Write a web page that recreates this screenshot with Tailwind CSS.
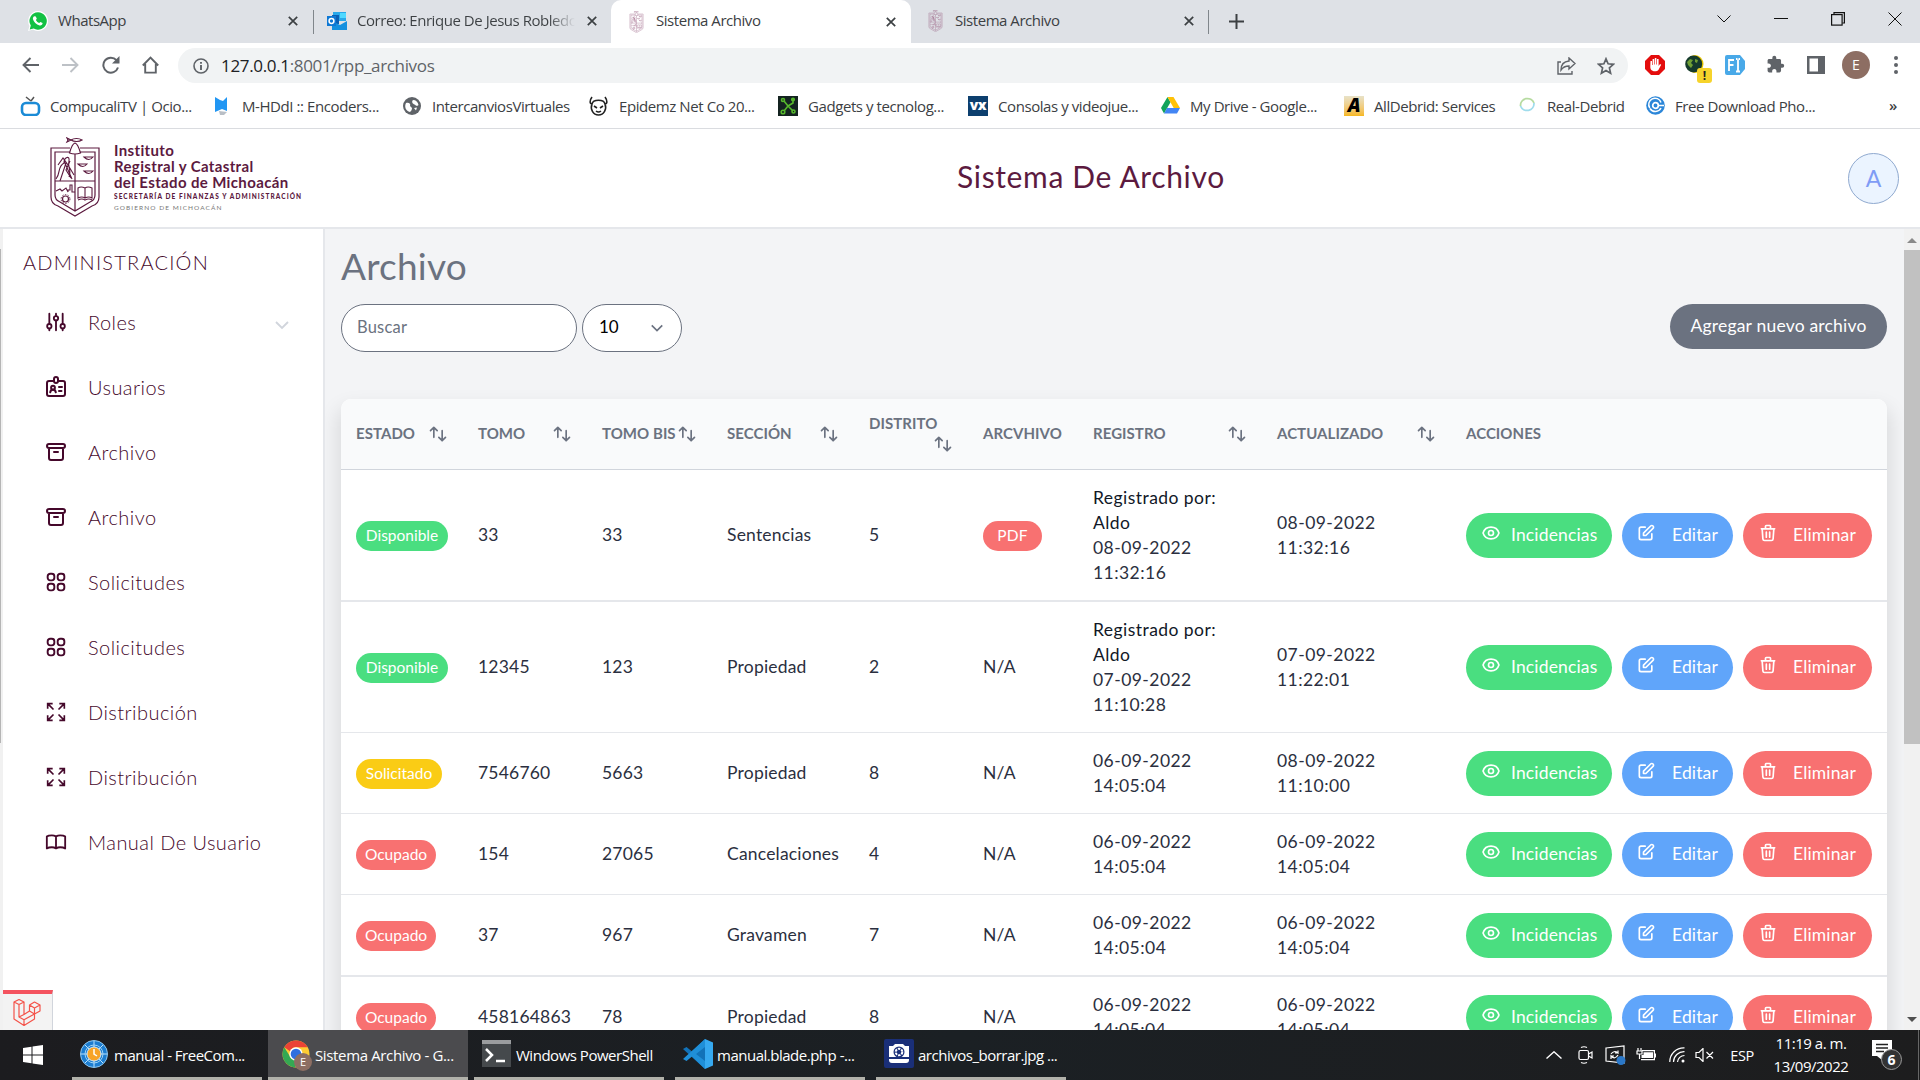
<!DOCTYPE html>
<html lang="es">
<head>
<meta charset="utf-8">
<title>Sistema Archivo</title>
<script src="https://cdn.jsdelivr.net/npm/@tailwindcss/browser@4"></script>
</head>
<body class="w-[1920px] h-[1080px] overflow-hidden flex flex-col bg-white font-['Lato',sans-serif]">

<svg class="hidden">
  <symbol id="sort" viewBox="0 0 24 24" fill="none" stroke="currentColor" stroke-width="2" stroke-linecap="round" stroke-linejoin="round"><path d="M7 16V4m0 0L3 8m4-4l4 4m6 0v12m0 0l4-4m-4 4l-4-4"/></symbol>
  <symbol id="eye" viewBox="0 0 24 24" fill="none" stroke="currentColor" stroke-width="2" stroke-linecap="round" stroke-linejoin="round"><path d="M15 12a3 3 0 11-6 0 3 3 0 016 0z"/><path d="M2.458 12C3.732 7.943 7.523 5 12 5c4.478 0 8.268 2.943 9.542 7-1.274 4.057-5.064 7-9.542 7-4.477 0-8.268-2.943-9.542-7z"/></symbol>
  <symbol id="edit" viewBox="0 0 24 24" fill="none" stroke="currentColor" stroke-width="2" stroke-linecap="round" stroke-linejoin="round"><path d="M11 5H6a2 2 0 00-2 2v11a2 2 0 002 2h11a2 2 0 002-2v-5m-1.414-9.414a2 2 0 112.828 2.828L11.828 15H9v-2.828l8.586-8.586z"/></symbol>
  <symbol id="trash" viewBox="0 0 24 24" fill="none" stroke="currentColor" stroke-width="2" stroke-linecap="round" stroke-linejoin="round"><path d="M19 7l-.867 12.142A2 2 0 0116.138 21H7.862a2 2 0 01-1.995-1.858L5 7m5 4v6m4-6v6m1-10V4a1 1 0 00-1-1h-4a1 1 0 00-1 1v3M4 7h16"/></symbol>
  <symbol id="chev" viewBox="0 0 24 24" fill="none" stroke="currentColor" stroke-width="2.8"><path d="M3 7.5l9 9 9-9"/></symbol>
  <symbol id="roles" viewBox="0 0 24 24" fill="none" stroke="currentColor" stroke-width="2.2" stroke-linecap="round"><path d="M4 2v12M4 20v2M12 2v2M12 10v12M20 2v12M20 20v2"/><circle cx="4" cy="17" r="2.6"/><circle cx="12" cy="7.5" r="2.6"/><circle cx="20" cy="17" r="2.6"/></symbol>
  <symbol id="users" viewBox="0 0 24 24" fill="none" stroke="currentColor" stroke-width="2" stroke-linecap="round" stroke-linejoin="round"><path d="M10 6H5a2 2 0 00-2 2v11a2 2 0 002 2h14a2 2 0 002-2V8a2 2 0 00-2-2h-5"/><path d="M10 6V4a2 2 0 014 0v2a2 2 0 01-4 0"/><circle cx="9" cy="12.7" r="1.9"/><path d="M6.2 17.3c.4-3.4 5.2-3.4 5.600 0M15 12h3M15 16h2.500"/></symbol>
  <symbol id="archive" viewBox="0 0 24 24" fill="none" stroke="currentColor" stroke-width="2" stroke-linecap="round" stroke-linejoin="round"><path d="M5 8h14M5 8a2 2 0 110-4h14a2 2 0 110 4M5 8v10a2 2 0 002 2h10a2 2 0 002-2V8m-9 4h4"/></symbol>
  <symbol id="grid4" viewBox="0 0 24 24" fill="none" stroke="currentColor" stroke-width="2.3"><rect x="2" y="2" width="8" height="8" rx="3"/><rect x="14" y="2" width="8" height="8" rx="3"/><rect x="2" y="14" width="8" height="8" rx="3"/><rect x="14" y="14" width="8" height="8" rx="3"/></symbol>
  <symbol id="expand" viewBox="0 0 24 24" fill="none" stroke="currentColor" stroke-width="2"><path d="M2 8V2h6M2 2l7 7M16 2h6v6M22 2l-7 7M2 16v6h6M2 22l7-7M22 16v6h-6M22 22l-7-7"/></symbol>
  <symbol id="book" viewBox="0 0 24 24" fill="none" stroke="currentColor" stroke-width="2" stroke-linecap="round" stroke-linejoin="round"><path d="M12 6v13M12 6C10.800 5.200 9.200 4.700 7.500 4.700S3.200 5 2 6v13c1.200-.8 3.800-1.300 5.500-1.300S10.800 18.200 12 19c1.200-.8 2.800-1.300 4.500-1.300s4.300.5 5.500 1.300V6c-1.200-1-3.800-1.300-5.500-1.300S13.200 5.200 12 6"/></symbol>
  <symbol id="shield" viewBox="0 0 50 80" fill="none" stroke="currentColor">
    <path stroke-width="1.200" d="M17 1l4 2c3-2 8-2 11 0-3 2-8 2-11 0l-4 2 1-2zM25 6c-3 1-4 5-5.500 10q5.500 2 11 0C29 11 28 7 25 6zM20 11H1v49q0 7 7 9l17 10 17-10q7-2 7-9V11H30M20 15H5v43q0 5 5 7l15 9 15-9q5-2 5-7V15H30M25 17v57M5 44h40"/>
    <path stroke-width="1.100" d="M6 42c5-6 1-12 8-16 0-6 6-8 5-2-2 5 3 10 0 16M8 28l5-7 5 7 6 10M10 44l6-18M14 24l8 18M20 24l-4 9 5 8M34 20h9q-4 5-9 0zM28 27h9q-4 5-9 0zM34 34h9q-4 5-9 0zM6 54l4-2 2 2 4-3 2 4v-2h2V48h2v7h3M28 51v10q4-2 7 0 4-2 7 0V51q-4-2-7 0-4-2-7 0zM35 51v10M28 63q4-2 7 0 4-2 7 0"/>
    <circle cx="15.500" cy="62" r="3" stroke-width="1.200"/><circle cx="15.500" cy="62" r="4.400" stroke-dasharray="1.400 1.400"/>
  </symbol>
  <symbol id="x" viewBox="0 0 10 10" stroke="currentColor" stroke-width="1.700"><path d="M.8.8l8.400 8.400M9.200.8L.8 9.200"/></symbol>
</svg>

<!-- Tab strip -->
<div class="h-[43px] shrink-0 bg-[#dee1e6] flex text-[15px] tracking-[-0.460px] text-[#3c4043] font-['Open_Sans',sans-serif]">
  <div class="w-[313px] h-[42px] flex items-center pl-[28px] pr-[15px]">
    <svg class="w-5 h-5 mr-[10px]" viewBox="0 0 20 20"><path fill="#fff" d="M10 0a10 10 0 11-5 18.600L0 20l1.500-5A10 10 0 0110 0z"/><path fill="#12c143" d="M10 1.300a8.700 8.700 0 11-4.300 16.200l-4 1.100 1.100-4A8.700 8.700 0 0110 1.300z"/><path fill="#fff" d="M6.500 5.300l1.300.2 1 2.200-.9 1.400c.8 1.600 1.900 2.400 3.300 3l1.200-1.200 2.200 1.100c.1 2-1.600 2.700-3 2.400-3.400-.8-6-3.400-6.700-6.300-.2-1.200.6-2.600 1.600-2.800z"/></svg>
    <span class="flex-1 -mt-[2px]">WhatsApp</span><svg class="w-[10px] h-[10px]"><use href="#x"/></svg>
  </div>
  <div class="w-px h-6 mt-[10px] bg-[#80868b]"></div>
  <div class="w-[297px] h-[42px] flex items-center pl-[13px] pr-[13px] rounded-br-[10px]">
    <svg class="w-5 h-[18px] mr-[10px]" viewBox="0 0 20 18"><path fill="#28a8ea" d="M6 0h13v9H6z"/><path fill="#0a5fb4" d="M5 3h7v9H5z"/><path fill="#50d9ff" d="M13 1h6v5h-6z"/><path fill="#1490df" d="M5 9l8 4 7-4v9H5z"/><path fill="#0f78d4" d="M0 4h9v10H0z"/><circle cx="4.500" cy="9" r="2.400" fill="none" stroke="#fff" stroke-width="1.500"/></svg>
    <span class="w-[218px] -mt-[2px] overflow-hidden whitespace-nowrap bg-linear-to-r from-[#3c4043] from-88% to-transparent bg-clip-text text-transparent mr-[12px]">Correo: Enrique De Jesus Robledo</span><svg class="w-[10px] h-[10px] shrink-0"><use href="#x"/></svg>
  </div>
  <div class="w-[300px] h-[43px] bg-white rounded-t-[10px] flex items-center pl-[18px] pr-[15px]">
    <svg class="w-[15px] h-[22px] mr-[12px] text-[#94557a]"><use href="#shield"/></svg>
    <span class="flex-1 -mt-[2px]">Sistema Archivo</span><svg class="w-[10px] h-[10px]"><use href="#x"/></svg>
  </div>
  <div class="w-[297px] h-[42px] flex items-center pl-[17px] pr-[14px]">
    <svg class="w-[15px] h-[22px] mr-[12px] text-[#94557a]"><use href="#shield"/></svg>
    <span class="flex-1 -mt-[2px]">Sistema Archivo</span><svg class="w-[10px] h-[10px]"><use href="#x"/></svg>
  </div>
  <div class="w-px h-6 mt-[10px] bg-[#80868b]"></div>
  <svg class="w-[15px] h-[15px] mt-[14px] ml-[20px]" viewBox="0 0 15 15" stroke="#3c4043" stroke-width="2"><path d="M7.500 0v15M0 7.500h15"/></svg>
  <div class="ml-auto flex pt-[12px] pr-[18px] gap-[43px] text-[#111]">
    <svg class="w-[14px] h-[14px]" viewBox="0 0 14 14" fill="none" stroke="currentColor"><path d="M.5 3.500L7 10l6.500-6.500"/></svg>
    <svg class="w-[14px] h-[14px]" viewBox="0 0 14 14" stroke="currentColor"><path d="M0 6.500h14"/></svg>
    <svg class="w-[14px] h-[14px]" viewBox="0 0 14 14" fill="none" stroke="currentColor" stroke-width="1.200"><rect x=".6" y="2.600" width="10.500" height="10.500"/><path d="M3 2.500V.6h10.400V11h-2"/></svg>
    <svg class="w-[14px] h-[14px]" viewBox="0 0 14 14" stroke="currentColor"><path d="M.5.5l13 13M13.500.5l-13 13"/></svg>
  </div>
</div>

<!-- Toolbar -->
<div class="h-[43px] shrink-0 flex items-center pl-[22px] text-[#5f6368] pr-[18px] font-['Open_Sans',sans-serif]">
  <svg class="w-[17px] h-4" viewBox="0 0 17 16" fill="none" stroke="currentColor" stroke-width="1.900"><path d="M17 8H1.500M8.500 1l-7 7 7 7"/></svg>
  <svg class="w-[17px] h-4 ml-[23px] text-[#bdc1c6]" viewBox="0 0 17 16" fill="none" stroke="currentColor" stroke-width="1.900"><path d="M0 8h15.500M8.500 1l7 7-7 7"/></svg>
  <svg class="w-[18px] h-[18px] ml-[23px]" viewBox="0 0 18 18" fill="none" stroke="currentColor" stroke-width="2"><path d="M16 11.500A7.500 7.500 0 1114.500 4.200L16.500 6.500"/><path fill="currentColor" stroke="none" d="M17.500 0v7.500H10z"/></svg>
  <svg class="w-[17px] h-[18px] ml-[22px]" viewBox="0 0 17 18" fill="none" stroke="currentColor" stroke-width="1.900"><path d="M.8 9.500L8.500 1.600l7.700 7.900M3.200 8v8.600h10.600V8"/></svg>
  <div class="ml-[19px] h-[35px] mt-[2px] w-[1450px] rounded-full bg-[#f1f3f4] flex items-center pl-[15px] pr-[13px]">
    <svg class="w-4 h-4" viewBox="0 0 16 16" fill="none" stroke="currentColor" stroke-width="1.600"><circle cx="8" cy="8" r="7"/><path stroke-width="1.900" d="M8 7v5M8 4v1.700"/></svg>
    <span class="ml-[12px] text-[17px] tracking-[-0.340px] flex-1"><span class="text-[#202124]">127.0.0.1</span>:8001/rpp_archivos</span>
    <svg class="w-[19px] h-[18px]" viewBox="0 0 19 18" fill="none" stroke="currentColor" stroke-width="1.400"><path d="M4 5H1v12h14v-3M12 1l6 5.500-6 5.500V9c-4 0-6 1-8 4 0-5 3-8.500 8-9z"/></svg>
    <svg class="w-[18px] h-[18px] ml-[21px]" viewBox="0 0 18 18" fill="none" stroke="currentColor" stroke-width="1.700"><path d="M9 1.800l2.100 5 5.400.5-4.100 3.600 1.200 5.300L9 13.400l-4.600 2.800 1.200-5.300L1.500 7.300l5.400-.5z"/></svg>
  </div>
  <svg class="w-5 h-5 ml-[17px]" viewBox="0 0 20 20"><path fill="#e40d0d" d="M6 0h8l6 6v8l-6 6H6l-6-6V6z"/><path fill="#fff" d="M5.500 6h1.500v4h.6V4h1.600v5.500h.6V3h1.600v6.500h.6V4h1.600v7l1.400-2 1.200.8-2.800 5.200c-1 1.500-6 2-7.500-.5-1-1.500-.4-5-.4-8.500z"/></svg>
  <div class="relative ml-[20px] w-[20px] h-5">
    <svg class="w-5 h-5" viewBox="0 0 20 20"><ellipse cx="10" cy="9" rx="8.500" ry="9" fill="#e8c500"/><circle cx="8.700" cy="9" r="8.500" fill="#153a2c"/><path fill="#6f9f35" d="M2 7l3-3 3 1-2 3 2 2-2 3-3-3zM10 4l3 1-1 3-2-1z"/></svg>
    <div class="absolute left-[12px] top-[13px] w-[15px] h-[15px] rounded-[3px] bg-[#f6d32b] text-[#222] text-[12px] leading-[15px] font-bold text-center">!</div>
  </div>
  <svg class="w-[20px] h-5 ml-[20px]" viewBox="0 0 20 20"><path fill="#49a9e8" d="M2 0h13l5 6v8l-5 6H2q-2 0-2-2V2q0-2 2-2z"/><path fill="none" stroke="#fff" stroke-width="1.800" d="M4 16V5h5M4 10h4.500M13 4.500v12M11 4h1.500M13.500 4H15M11 16.500h4"/></svg>
  <svg class="w-[19px] h-[19px] ml-[21px]" viewBox="0 0 24 24" fill="currentColor"><path d="M20.500 11H19V7c0-1.100-.9-2-2-2h-4V3.500a2.500 2.500 0 00-5 0V5H4c-1.100 0-2 .9-2 2v3.800h1.500c1.500 0 2.700 1.200 2.700 2.700S5 16.200 3.500 16.200H2V20c0 1.100.9 2 2 2h3.800v-1.500c0-1.500 1.200-2.700 2.700-2.700s2.700 1.200 2.700 2.700V22H17c1.100 0 2-.9 2-2v-4h1.500a2.500 2.500 0 000-5z"/></svg>
  <svg class="w-[18px] h-[18px] ml-[22px]" viewBox="0 0 18 18"><path fill="currentColor" fill-rule="evenodd" d="M0 0h18v18H0zM2.500 2.500v13H11v-13z"/></svg>
  <div class="ml-[17px] w-7 h-7 rounded-full bg-[#8d6e63] text-white text-[14px] leading-7 text-center">E</div>
  <svg class="w-1 h-[18px] ml-auto mr-[4px]" viewBox="0 0 4 18" fill="currentColor"><circle cx="2" cy="2" r="2"/><circle cx="2" cy="9" r="2"/><circle cx="2" cy="16" r="2"/></svg>
</div>

<!-- Bookmarks -->
<div class="h-[43px] shrink-0 border-b border-[#dadce0] text-[15px] leading-[38px] pb-[3px] tracking-[-0.420px] text-[#3c4043] whitespace-nowrap grid grid-cols-[192px_189px_187px_188px_190px_193px_183px_173px_129px_1fr_34px] pl-[20px] font-['Open_Sans',sans-serif]">
  <div class="flex items-center gap-[9px]"><svg class="w-[21px] h-5" viewBox="0 0 21 20" fill="none"><rect x="2" y="7" width="17" height="12" rx="4" stroke="#1b8bd6" stroke-width="2.600"/><path stroke="#555" stroke-width="1.500" d="M11 5L6 1M11 5l3-4"/></svg>CompucaliTV | Ocio...</div>
  <div class="flex items-center gap-[11px]"><svg class="w-[19px] h-5" viewBox="0 0 19 20"><path fill="#2196f3" d="M3 1l5 3 3 1 4-4v14l-5-2-7 3z"/><path fill="#b9bfc6" d="M7 15l8 1-3 3H8z"/></svg>M-HDdI :: Encoders...</div>
  <div class="flex items-center gap-[11px] pl-[2px]"><svg class="w-[18px] h-[18px]" viewBox="0 0 18 18"><circle cx="9" cy="9" r="9" fill="#5f6368"/><path fill="#fff" d="M3 6c3-1 5 1 4 3l2 2c0 2-1 3-2 4-4-1-6-5-4-9zM10 3c3 0 5 2 5.500 5-2 2-3 0-4-.5C10 7 8 5 10 3zM11 11l3-.5-1 3z"/></svg>IntercanviosVirtuales</div>
  <div class="flex items-center gap-[11px] pl-[1px]"><svg class="w-[19px] h-5" viewBox="0 0 19 20" fill="none" stroke="#222" stroke-width="1.600"><path d="M3 1C0 5 1 8 3 8M16 1c3 4 2 7 0 7M3 8c-2 5 1 11 6.500 11S18 13 16 8c-1-5-12-5-13 0z"/><path d="M5 10l3 2M14 10l-3 2M7 15q2.500 2 5 0"/></svg>Epidemz Net Co 20...</div>
  <div class="flex items-center gap-[10px] pl-[2px]"><svg class="w-5 h-5" viewBox="0 0 20 20"><path fill="#142320" d="M0 0h20v20H0z"/><g stroke="#56b82c" fill="none" stroke-width="1.600"><path d="M10 10L6 5M10 10l5-3V3M10 10l-4 5M10 10l5 5"/><circle cx="5" cy="4" r="1.500"/><circle cx="15" cy="3.500" r="1.300"/><circle cx="5" cy="16" r="1.800"/><circle cx="15.500" cy="15.500" r="1.500"/></g></svg>Gadgets y tecnolog...</div>
  <div class="flex items-center gap-[10px] pl-[2px]"><span class="w-5 h-5 bg-[#0d3f6e] text-white text-[14px] leading-[18px] font-extrabold text-center">vx</span>Consolas y videojue...</div>
  <div class="flex items-center gap-[10px] pl-[2px]"><svg class="w-[19px] h-[17px]" viewBox="0 0 19 17"><path fill="#11a35a" d="M6.500 0L0 11l3 5.500L9.500 5.300z"/><path fill="#ffc107" d="M6.500 0h6L19 11h-6.300z"/><path fill="#4285f4" d="M6 11h13l-3 5.500H3z"/></svg>My Drive - Google...</div>
  <div class="flex items-center gap-[10px] pl-[2px]"><span class="w-5 h-5 bg-linear-to-b from-[#e8e2c8] to-[#f6b818] text-black text-[19px] leading-[19px] font-extrabold italic text-center">A</span>AllDebrid: Services</div>
  <div class="flex items-center gap-[11px] pl-[4px]"><svg class="w-[17px] h-[17px]" viewBox="0 0 17 17" fill="none" stroke-width="1.800"><path stroke="#b6dba0" d="M1.500 9A7 7 0 0115 6"/><path stroke="#9fdcec" d="M15 6A7 7 0 011.500 9"/></svg>Real-Debrid</div>
  <div class="flex items-center gap-[10px] pl-[2px]"><svg class="w-[19px] h-[19px]" viewBox="0 0 19 19" fill="none"><circle cx="9.500" cy="9.500" r="9.300" fill="#2b86d8"/><path stroke="#fff" stroke-width="1.500" d="M15 6.500A6.300 6.300 0 103.800 12M4 12.500A6.300 6.300 0 0015 12"/><circle cx="9.500" cy="9.500" r="2.800" stroke="#fff" stroke-width="1.700"/><path stroke="#fff" stroke-width="1.500" d="M12 9.500h6"/></svg>Free Download Pho...</div>
  <div class="font-semibold pl-[3px]">»</div>
</div>

<!-- Page header -->
<header class="h-[100px] shrink-0 border-b-2 border-gray-200 flex items-center text-[#5c1a3f]">
  <svg class="w-[52px] h-[80px] ml-[49px] -mt-[2px]"><use href="#shield"/></svg>
  <div class="ml-[13px] w-[220px] whitespace-nowrap -mt-[2px]">
    <div class="font-bold text-[15px] leading-[16px] tracking-[0.360px]">Instituto<br>Registral y Catastral<br>del Estado de Michoacán</div>
    <div class="font-black text-[6.500px] leading-[13px] tracking-[1.080px]">SECRETARÍA DE FINANZAS Y ADMINISTRACIÓN</div>
    <div class="text-[6.500px] leading-[9px] tracking-[1.060px] text-[#777]">GOBIERNO DE MICHOACÁN</div>
  </div>
  <h1 class="flex-1 pl-[623px] -mt-[4px] text-[30px] leading-[40px] tracking-[0.650px] whitespace-nowrap">Sistema De Archivo</h1>
  <div class="w-[51px] h-[51px] mr-[21px] rounded-full border border-[#8fa9cf] bg-[#ebf4ff] text-[#7f9cf5] text-[23px] leading-[48px] text-center">A</div>
</header>

<!-- Page body -->
<div class="h-[801px] shrink-0 flex relative">
  <div class="w-[3px] bg-[#f1f1f1] pt-[20px]"><div class="w-px h-[494px] bg-[#b5b5b5]"></div></div>
  <aside class="w-[322px] border-r-2 border-gray-200 text-[#45082b] font-light">
    <div class="pl-[20px] pt-[18px] text-[20px] leading-[30px] tracking-[1.220px]">ADMINISTRACIÓN</div>
    <nav id="nav" class="mt-[14px] text-[20px] tracking-[0.450px]"></nav>
  </aside>
  <main class="w-[1579px] bg-[#f3f4f6] pl-[16px] pt-[12px] overflow-hidden">
    <h2 class="text-[37px] leading-[50px] font-normal text-[#6b7280] tracking-[0.200px]">Archivo</h2>
    <div class="flex mt-[13px] text-[16.500px]">
      <div class="w-[236px] h-[48px] rounded-[24px] border border-[#6b7280] bg-white text-[#6b7280] pl-[15px] leading-[45px] tracking-[0.200px]">Buscar</div>
      <div class="w-[100px] h-[48px] ml-[5px] rounded-[24px] border border-[#6b7280] bg-white text-black pl-[16px] pr-[17px] flex justify-between items-center text-[17px]"><span class="-mt-[2px]">10</span><svg class="w-[14px] h-[14px] text-[#6b7280]"><use href="#chev"/></svg></div>
      <div class="ml-auto mr-[17px] w-[217px] h-[45px] rounded-full bg-[#6b7280] text-white text-[17.500px] leading-[44px] text-center tracking-[0.200px]">Agregar nuevo archivo</div>
    </div>
    <div class="w-[1546px] mt-[47px] rounded-t-[10px] bg-white shadow-[0_12px_19px_4px_rgba(0,0,0,0.1)]">
      <div class="h-[71px] rounded-t-[10px] border-b border-gray-300 bg-[#f9fafb] text-[#6b7280] text-[15px] leading-[20px] tracking-[0.050px] font-bold grid grid-cols-[122px_124px_125px_142px_114px_110px_184px_189px_436px] items-center *:px-[15px] *:flex *:justify-between *:whitespace-nowrap">
        <div><span class="-mt-px">ESTADO</span><svg class="w-[20px] h-[20px] shrink-0"><use href="#sort"/></svg></div>
        <div><span class="-mt-px">TOMO</span><svg class="w-[20px] h-[20px] shrink-0"><use href="#sort"/></svg></div>
        <div><span class="-mt-px">TOMO BIS</span><svg class="w-[20px] h-[20px] shrink-0"><use href="#sort"/></svg></div>
        <div><span class="-mt-px">SECCIÓN</span><svg class="w-[20px] h-[20px] shrink-0"><use href="#sort"/></svg></div>
        <div class="flex-col items-start"><span class="-mt-px mb-px">DISTRITO</span><svg class="w-[20px] h-[20px] shrink-0 self-end"><use href="#sort"/></svg></div>
        <div><span class="-mt-[2px]">ARCVHIVO</span></div>
        <div><span class="-mt-px">REGISTRO</span><svg class="w-[20px] h-[20px] shrink-0"><use href="#sort"/></svg></div>
        <div><span class="-mt-px">ACTUALIZADO</span><svg class="w-[20px] h-[20px] shrink-0"><use href="#sort"/></svg></div>
        <div><span class="-mt-[2px]">ACCIONES</span></div>
      </div>
      <div id="rows"></div>
    </div>
  </main>
  <div class="w-4 bg-[#f1f1f1] flex flex-col items-center pt-[9px] pb-[8px]">
    <div class="border-x-[5px] border-x-transparent border-b-[5px] border-b-[#8a8a8a]"></div>
    <div class="w-4 h-[494px] mt-[7px] bg-[#c1c1c1]"></div>
    <div class="mt-auto border-x-[5px] border-x-transparent border-t-[5px] border-t-[#505050]"></div>
  </div>
  <div class="absolute left-[3px] bottom-0 w-[50px] h-[40px] border-t-4 border-t-[#f4535f] border-r border-r-gray-300 bg-[#f3f3f3] pl-[10px] pt-[5px]">
    <svg class="w-[28px] h-[27px]" viewBox="0 0 28 27" fill="none" stroke="#f4534a" stroke-width="1.200" stroke-linejoin="round"><path d="M1 3l5-2.500L11 3v12.500L16.500 12V6l5-3L27 6v6l-5.500 3v5L11 26.500 1 20zM1 3l5 2.500L11 3M6 5.500v12.500l5 2.700 10.500-5.700M11 26.500v-5.800M16.500 6l5 3L27 6M21.500 9v6M6 18l5-2.500M16.500 12l5 3"/></svg>
  </div>
</div>

<!-- Taskbar -->
<div class="h-[50px] shrink-0 bg-linear-to-r from-[#1c1c1f] via-[#1b2024] to-[#1d1d1e] flex text-white text-[15px] whitespace-nowrap font-['Open_Sans',sans-serif]">
  <div class="w-[72px] pl-[23px] pt-[15px]"><svg class="w-5 h-5" viewBox="0 0 20 20" fill="#fff"><path d="M0 3l8.500-1.200v7.700H0zM9.500 1.600L20 0v9.500H9.500zM0 10.500h8.500v7.700L0 17zM9.500 10.500H20V20L9.500 18.400z"/></svg></div>
  <div class="w-[190px] border-b-[3px] border-[#b1b1aa] flex items-center pl-[8px] gap-[6px] mr-[6px] tracking-[-0.500px]">
    <svg class="w-7 h-7" viewBox="0 0 28 28"><circle cx="14" cy="14" r="13.500" fill="#1c7dd0" stroke="#8fc8f0"/><g stroke="#bfe3fa" stroke-width="1"><path d="M14 1v26M1 14h26M5 5l18 18M23 5L5 23"/></g><circle cx="14" cy="14" r="9" fill="none" stroke="#9fd4f7"/><circle cx="14" cy="14" r="7" fill="#f7a427" stroke="#d6e9f5" stroke-width="1"/><path stroke="#fff" stroke-width="1.500" d="M14 9v5l3 2" fill="none"/></svg><span class="mt-[3px]">manual - FreeCom...</span></div>
  <div class="w-[200px] border-b-[3px] border-[#b1b1aa] bg-[#4b4b4e] flex items-center pl-[14px] gap-[5px] mr-[6px] tracking-[-0.360px]">
    <div class="relative w-7 h-7"><svg class="w-7 h-7" viewBox="0 0 28 28"><circle cx="14" cy="14" r="13.500" fill="#fc3"/><path fill="#ea4335" d="M2.300 7.300A13.500 13.500 0 0125.700 7.300H14a6.700 6.700 0 00-6 4z"/><path fill="#34a853" d="M2.300 7.300A13.500 13.500 0 0013 27.500l6-10a6.700 6.700 0 01-11-1z"/><circle cx="14" cy="14" r="6.700" fill="#fff"/><circle cx="14" cy="14" r="5.300" fill="#2f6fe0"/></svg><div class="absolute left-[12px] top-[13px] w-[18px] h-[18px] rounded-full bg-[#8d6e63] text-[11px] leading-[18px] text-center">E</div></div><span class="mt-[3px]">Sistema Archivo - G...</span></div>
  <div class="w-[190px] border-b-[3px] border-[#b1b1aa] flex items-center pl-[8px] gap-[5px] mr-[11px] tracking-[-0.480px]">
    <svg class="w-[29px] h-[27px]" viewBox="0 0 29 27"><path fill="#45494c" d="M0 0h29v27H0z"/><path fill="#9b9d9f" d="M0 0h29v4H0z"/><path fill="none" stroke="#fff" stroke-width="2.500" d="M4 9l6 6-6 6M14 21h9"/></svg><span class="mt-[3px]">Windows PowerShell</span></div>
  <div class="w-[190px] border-b-[3px] border-[#b1b1aa] flex items-center pl-[8px] gap-[4px] mr-[11px] tracking-[-0.490px]">
    <svg class="w-[30px] h-[30px]" viewBox="0 0 30 30"><path fill="#1272b8" d="M22 0L9 12.500 3.500 8 0 10l22 20z"/><path fill="#1f8fd8" d="M22 30L9 17.500 3.500 22 0 20 22 0v8l-9 7 9 7z"/><path fill="#36a9f0" d="M22 0l8 3.500v23L22 30z"/></svg><span class="mt-[3px]">manual.blade.php -...</span></div>
  <div class="w-[190px] border-b-[3px] border-[#b1b1aa] flex items-center pl-[8px] gap-[4px] tracking-[-0.490px]">
    <svg class="w-[30px] h-[29px]" viewBox="0 0 30 29"><rect width="30" height="29" rx="2" fill="#1a2f78"/><path fill="#fff" d="M5 7h4l2-2h8l2 2h4v11H5zM5 20h20v1q0 3-3 3H8q-3 0-3-3z"/><circle cx="15" cy="13" r="5.500" fill="#1a2f78"/><circle cx="15" cy="13" r="3.300" fill="none" stroke="#fff" stroke-width="2" stroke-dasharray="2.500 1"/></svg><span class="mt-[3px]">archivos_borrar.jpg ...</span></div>
  <div class="ml-auto flex items-center">
    <svg class="w-4 h-2" viewBox="0 0 16 8" fill="none" stroke="#fff" stroke-width="1.400"><path d="M.5 7.500L8 .8l7.500 6.700"/></svg>
    <svg class="w-[15px] h-[18px] ml-[16px]" viewBox="0 0 15 18" fill="none" stroke="#fff" stroke-width="1.200"><rect x="1" y="4.500" width="9.500" height="9" rx="1.500"/><path d="M10.500 8l3.500-2v6l-3.500-2M3 1.500q3-1.500 6 0M3 16.500q3 1.500 6 0"/></svg>
    <svg class="w-[21px] h-5 ml-[12px]" viewBox="0 0 21 20" fill="none" stroke="#fff" stroke-width="1.200"><path d="M1 3l18-2v17L1 16zM6 9q3-4 7-1V5.500M13 8h-3M13 10q-3 5-7 1v3M6 11h3"/><circle cx="16" cy="15.500" r="4.500" fill="#2b78c8" stroke="none"/></svg>
    <svg class="w-5 h-[14px] ml-[10px]" viewBox="0 0 20 14"><path fill="none" stroke="#fff" stroke-width="1.200" d="M2 0v3M5 0v3M1 3h5v3H1zM3.500 6v5M6 2.600h12.400v9H5"/><path fill="#fff" d="M7.500 4.200h9.500v5.900H5.500V7h2zM18.500 5.500H20v4h-1.500z"/></svg>
    <svg class="w-4 h-4 ml-[13px]" viewBox="0 0 16 16" fill="none" stroke="#fff" stroke-width="1.200"><path d="M.8 15A14 14 0 0115.500.8M4.500 15A10.500 10.500 0 0115.500 4.700M8.500 15a7 7 0 017-6.500"/><circle cx="14" cy="14" r="1.500" fill="#fff" stroke="none"/></svg>
    <svg class="w-[19px] h-[14px] ml-[10px]" viewBox="0 0 19 14" fill="none" stroke="#fff" stroke-width="1.200"><path d="M1 4.500h3l4-4v13l-4-4H1zM11.500 4l6.500 6.500M18 4l-6.500 6.500"/></svg>
    <span class="ml-[16px] mt-[1px] text-[14.500px] tracking-[-0.300px]">ESP</span>
    <div class="w-[78px] ml-[18px] text-center leading-[23px] -mt-[1px] tracking-[-0.480px]">11:19 a. m.<br>13/09/2022</div>
    <div class="relative ml-[22px] mr-[17px] w-[29px] h-[30px]"><svg class="w-5 h-5" viewBox="0 0 20 20"><path fill="#fff" d="M0 0h20v16H10l0 4-5-4H0z"/><path stroke="#222" stroke-width="1.300" d="M4 4.500h12M4 8h12M4 11.500h8"/></svg><div class="absolute left-[9px] top-[9px] w-[21px] h-[21px] rounded-full border border-[#999] bg-[#333] text-[14px] leading-[19px] font-bold text-center">6</div></div>
    <div class="w-px h-full bg-[#666] mr-[1px]"></div>
  </div>
</div>

<script>
const items = [['roles','Roles'],['users','Usuarios'],['archive','Archivo'],['archive','Archivo'],['grid4','Solicitudes'],['grid4','Solicitudes'],['expand','Distribución'],['expand','Distribución'],['book','Manual De Usuario']];
const sizes = {roles:'w-[20px] h-[20px] mx-[1px]',users:'w-[24px] h-[24px] -mx-[1px]',archive:'w-[24px] h-[24px] -mx-[1px]',grid4:'w-[20px] h-[20px] mx-[1px]',expand:'w-[20px] h-[20px] mx-[1px]',book:'w-[22px] h-[22px]'};
document.getElementById('nav').innerHTML = items.map(([icon,label]) => `
  <div class="h-[65px] flex items-center pl-[42px] pr-[33px]">
    <svg class="${sizes[icon]} shrink-0 -translate-y-[2px]"><use href="#${icon}"/></svg>
    <span class="ml-[21px] -mt-[4px] flex-1">${label}</span>
    ${icon==='roles' ? '<svg class="w-[16px] h-[16px] text-gray-300 mt-[2px]"><use href="#chev"/></svg>' : ''}
  </div>`).join('');

const colors = {Disponible:'bg-[#4ade80] w-[92px]',Solicitado:'bg-[#facc15] w-[86px]',Ocupado:'bg-[#f87171] w-[80px]'};
const data = [
  ['Disponible','33','33','Sentencias','5',true,'08-09-2022<br>11:32:16','08-09-2022<br>11:32:16',true,'h-[132px] border-b-2'],
  ['Disponible','12345','123','Propiedad','2',false,'07-09-2022<br>11:10:28','07-09-2022<br>11:22:01',true,'h-[131px] border-b'],
  ['Solicitado','7546760','5663','Propiedad','8',false,'06-09-2022<br>14:05:04','08-09-2022<br>11:10:00',false,'h-[81px] border-b'],
  ['Ocupado','154','27065','Cancelaciones','4',false,'06-09-2022<br>14:05:04','06-09-2022<br>14:05:04',false,'h-[81px] border-b'],
  ['Ocupado','37','967','Gravamen','7',false,'06-09-2022<br>14:05:04','06-09-2022<br>14:05:04',false,'h-[82px] border-b-2'],
  ['Ocupado','458164863','78','Propiedad','8',false,'06-09-2022<br>14:05:04','06-09-2022<br>14:05:04',false,'h-[82px] border-b-2']
];
document.getElementById('rows').innerHTML = data.map(r => `
  <div class="${r[9]} border-gray-200 text-[#2b2f40] text-[17.500px] leading-[25px] tracking-[0.200px] pb-[1px] grid grid-cols-[122px_124px_125px_142px_114px_110px_184px_189px_436px] items-center *:px-[15px]">
    <div><div class="${colors[r[0]]} h-[30px] mt-[3px] rounded-full text-white text-[15.500px] leading-[29px] text-center tracking-normal">${r[0]}</div></div>
    <div>${r[1]}</div><div>${r[2]}</div><div>${r[3]}</div><div>${r[4]}</div>
    <div>${r[5] ? '<div class="bg-[#f87171] w-[59px] h-[30px] mt-[3px] rounded-full text-white text-[15.500px] leading-[29px] text-center">PDF</div>' : 'N/A'}</div>
    <div class="tracking-[0.450px]">${r[8] ? '<span class="text-[#111827]">Registrado por:<br>Aldo</span><br>' : ''}${r[6]}</div>
    <div class="tracking-[0.450px]">${r[7]}</div>
    <div class="flex gap-[10px] text-white tracking-[0.150px] pt-[1px]">
      <div class="w-[146px] h-[45px] rounded-full bg-[#4ade80] flex items-center pl-[15px]"><svg class="w-[20px] h-[20px] mr-[10px] -mt-[5px]"><use href="#eye"/></svg><span class="-mt-[2px]">Incidencias</span></div>
      <div class="w-[111px] h-[45px] rounded-full bg-[#60a5fa] flex items-center pl-[14px]"><svg class="w-[20px] h-[20px] mr-[16px] -mt-[5px]"><use href="#edit"/></svg><span class="-mt-[2px]">Editar</span></div>
      <div class="w-[129px] h-[45px] rounded-full bg-[#f87171] flex items-center pl-[15px]"><svg class="w-[20px] h-[20px] mr-[15px] -mt-[5px]"><use href="#trash"/></svg><span class="-mt-[2px]">Eliminar</span></div>
    </div>
  </div>`).join('');
</script>
</body>
</html>
